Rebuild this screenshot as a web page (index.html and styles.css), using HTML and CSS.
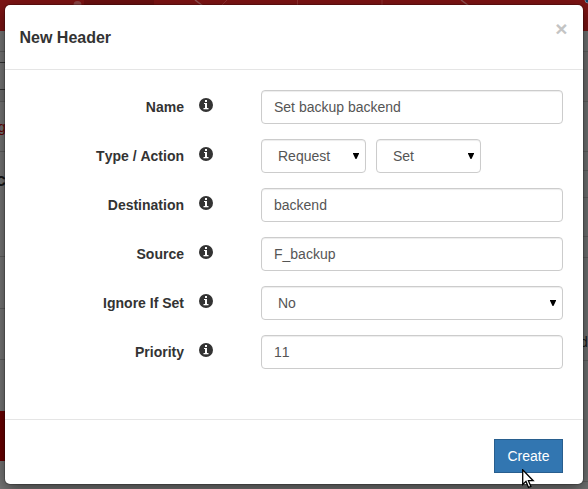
FILE: index.html
```html
<!DOCTYPE html>
<html lang="en">
<head>
<meta charset="utf-8">
<title>New Header</title>
<link rel="stylesheet" href="styles.css">
</head>
<body>
<svg width="0" height="0" class="defs"><symbol id="info" viewBox="0 0 14 14"><circle cx="7" cy="7" r="7" fill="#333"/><path d="M6 2h2v2H6zM5 5h3v5h1v1H5v-1h1V6H5z" fill="#fff"/><path d="M4.500 10h5v1.300h-5z" fill="#fff"/></symbol></svg>
<div class="page">
  <div class="topbar">
    <svg width="588" height="31" viewBox="0 0 588 31"><path d="M84 0h70v31H84z" fill="#6c1010"/><circle cx="77.5" cy="5" r="4" fill="#8e4646"/><path d="M195 0l8 6M461 0l8 6" stroke="#915050" stroke-width="1.5"/><path d="M227 0l-5 5M297.500 0v5M382 0v5" stroke="#8e3030" fill="none"/><circle cx="588" cy="0" r="3" fill="#0c4a70" stroke="#789"/></svg>
  </div>
  <div class="columns">
    <div class="strip left">
      <div class="seg s20"></div><div class="seg s11 dark"></div><div class="seg s27 dark"></div><div class="seg s12 shade"></div>
      <div class="seg s50"><span class="link">g</span></div>
      <div class="seg s105"><span class="title">c</span></div>
      <div class="seg s52"></div><div class="seg s51"></div><div class="seg s51 plain"></div><div class="alert"></div>
    </div>
    <div class="strip right">
      <div class="seg s20"></div><div class="seg s50 shade"></div><div class="seg s50"></div><div class="seg s19"></div><div class="seg s27"></div><div class="seg s39"></div><div class="seg s20"></div><div class="seg s103"><span class="word">d</span></div><div class="seg s121"></div>
    </div>
  </div>
</div>
<div class="modal">
  <div class="modal-header"><h4>New Header</h4><span class="close">×</span></div>
  <div class="modal-body">
    <div class="row"><label>Name</label><svg class="info"><use href="#info"/></svg><div class="control">Set backup backend</div></div>
    <div class="row"><label>Type / Action</label><svg class="info"><use href="#info"/></svg><div class="pair"><div class="control select">Request<i></i></div><div class="control select">Set<i></i></div></div></div>
    <div class="row"><label>Destination</label><svg class="info"><use href="#info"/></svg><div class="control">backend</div></div>
    <div class="row"><label>Source</label><svg class="info"><use href="#info"/></svg><div class="control">F_backup</div></div>
    <div class="row"><label>Ignore If Set</label><svg class="info"><use href="#info"/></svg><div class="control select">No<i></i></div></div>
    <div class="row"><label>Priority</label><svg class="info"><use href="#info"/></svg><div class="control">11</div></div>
  </div>
  <div class="modal-footer"><div class="btn">Create</div></div>
</div>
<svg class="cursor" width="13" height="20" viewBox="0 0 13 20"><path d="M.7 .8v14.700l3.300-3.100 2.500 6 2.400-1-2.500-5.700h4.800z" fill="#fff" stroke="#000" stroke-width="1.300"/></svg>
</body>
</html>
```
FILE: styles.css
```css
* { box-sizing: border-box; }
body { margin: 0; width: 588px; height: 489px; overflow: hidden; position: relative; font: 14px/20px "Liberation Sans", Arial, sans-serif; font-kerning: none; color: #333; background: #777; }
.defs { position: absolute; }
.page { height: 489px; overflow: hidden; }
.topbar { height: 31px; background: #7d1414; }
.topbar svg { display: block; }
.columns { display: flex; justify-content: space-between; height: 458px; }
.strip { width: 8px; overflow: hidden; }
.left { background: #777; }
.right { background: #707373; }
.seg { border-bottom: 1px solid #606060; overflow: hidden; }
.dark { border-color: #333; }
.plain { border: 0; }
.shade { background: #6f6f6f; }
.s11 { height: 11px; }
.s12 { height: 12px; }
.s19 { height: 19px; }
.s20 { height: 21px; }
.s27 { height: 27px; }
.s39 { height: 39px; }
.s50 { height: 50px; }
.s51 { height: 51px; }
.s52 { height: 52px; }
.s103 { height: 103px; }
.s105 { height: 105px; }
.s121 { height: 121px; }
.link { display: block; margin: 15px 0 0 -2px; color: #600; text-decoration: underline; }
.title { display: block; margin: 18px 0 0 -4px; font-size: 18px; font-weight: bold; color: #181818; }
.word { display: block; margin: 74px 0 0 0; color: #181818; }
.alert { height: 50px; background: #6c0000; }
.modal { position: absolute; left: 5px; top: 5px; width: 578px; height: 479px; display: flex; flex-direction: column; background: #fff; border-radius: 5px; box-shadow: 0 0 0 1px rgba(0,0,0,.2), 0 5px 15px rgba(0,0,0,.5); }
.modal-header { height: 65px; padding: 23px 15px 0 14.5px; display: flex; justify-content: space-between; border-bottom: 1px solid #e5e5e5; }
h4 { margin: 0; font-size: 16px; line-height: 20px; }
.close { font-size: 21px; line-height: 21px; font-weight: bold; color: #c4c4c4; margin: -10px .5px 0 0; }
.modal-body { height: 349px; padding: 20px 20px 0 15px; display: flex; flex-direction: column; gap: 15px; }
.row { display: grid; grid-template-columns: 164px 14px 335px; column-gap: 15px; height: 34px; }
.row > :last-child { margin-left: 33px; }
label { text-align: right; font-weight: bold; line-height: 20px; padding-top: 7px; }
.info { width: 14px; height: 14px; margin: 8px 0 0 -.5px; }
.control { height: 34px; padding: 6px 12px; border: 1px solid #ccc; border-radius: 4px; color: #555; background: #fff; box-shadow: inset 0 1px 1px rgba(0,0,0,.075); }
.pair { display: flex; gap: 10px; }
.pair .control { width: 105px; }
.select { display: flex; justify-content: space-between; align-items: center; padding: 0 6px 0 16px; }
.select i { width: 6px; height: 6px; background: #000; clip-path: polygon(0 0, 100% 0, 100% 12%, 58% 100%, 42% 100%, 0 12%); }
.modal-footer { height: 65px; padding: 19px 20px 0; display: flex; justify-content: flex-end; border-top: 1px solid #e5e5e5; }
.btn { width: 69px; height: 34px; border: 1px solid #285e8e; background: #3276b1; color: #fff; line-height: 32px; text-align: center; }
.cursor { position: absolute; left: 522px; top: 469px; }
```
